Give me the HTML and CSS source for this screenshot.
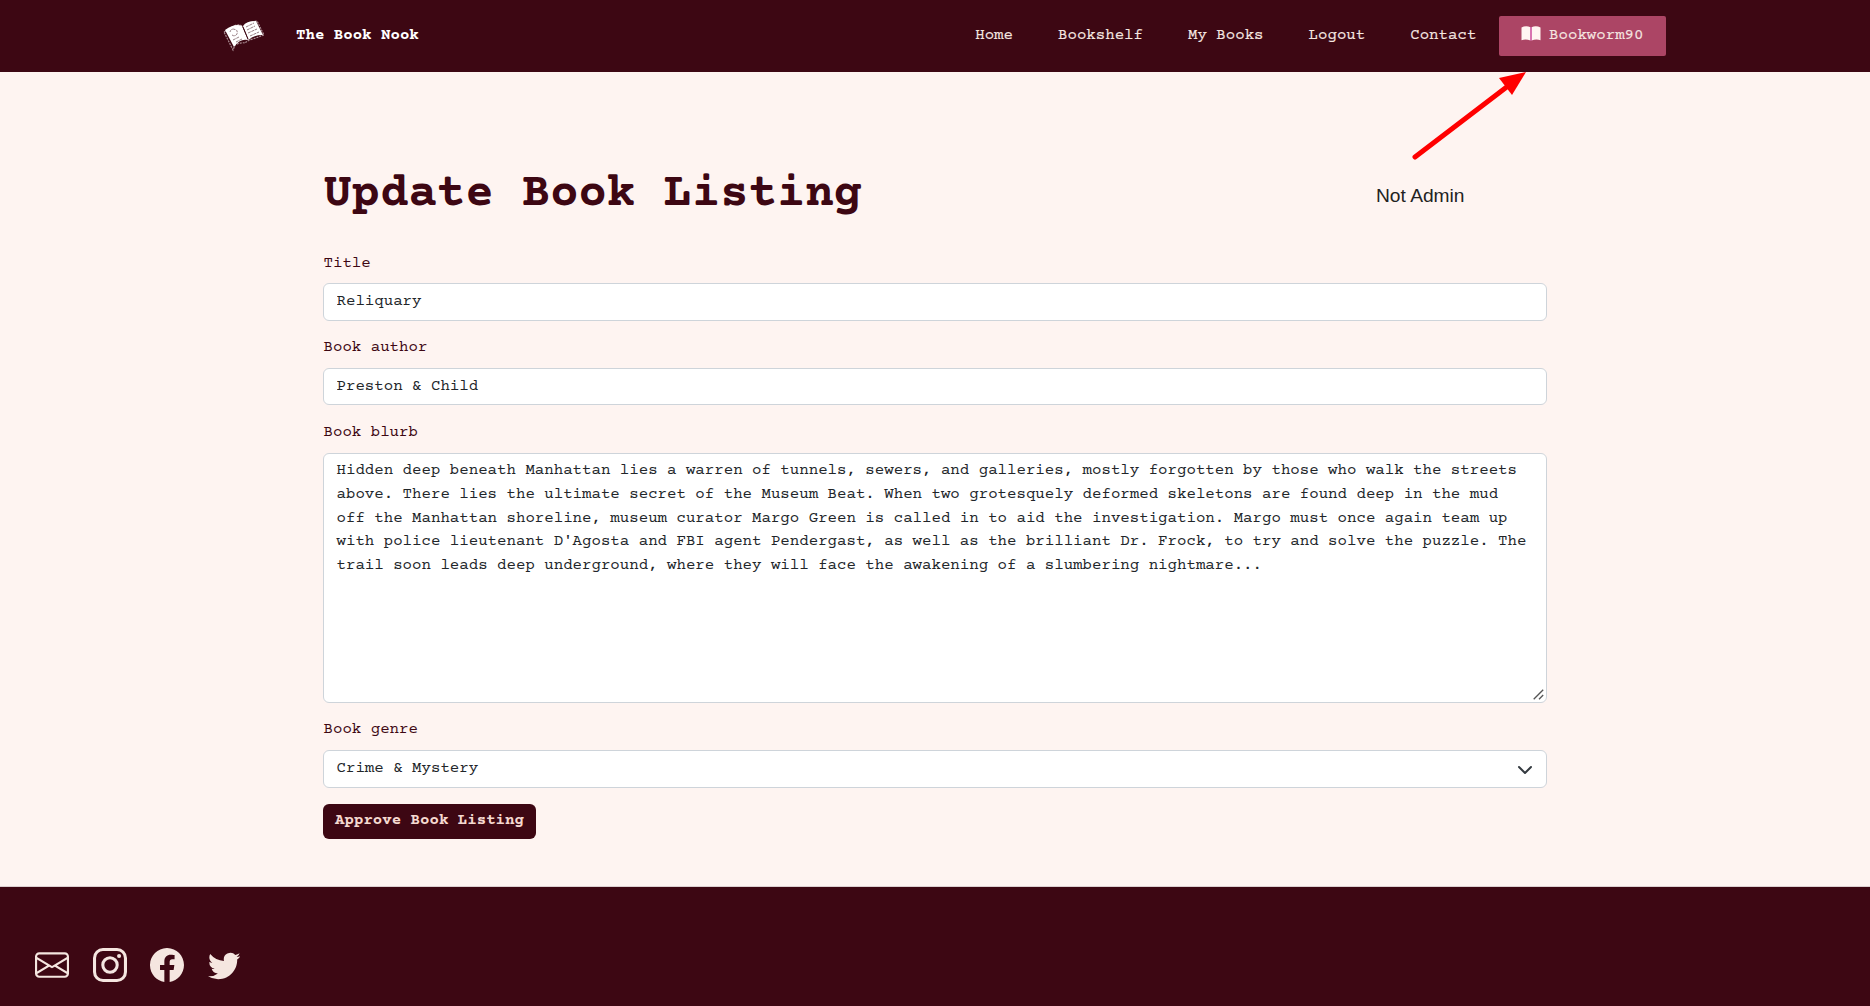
FILE: index.html
```html
<!DOCTYPE html>
<html lang="en">
<head>
<meta charset="utf-8">
<title>The Book Nook</title>
<link rel="stylesheet" href="styles.css">
</head>
<body>
<header class="navbar">
  <a class="brand">
    <svg class="logo" viewBox="0 0 42 32">
      <path d="M1 12L11 6Q17 3 21 8Q23 3 28 2L34 1L41 15L30 19Q25 20 22 23Q18 22 12 25L10 30Z" fill="none" stroke="#a98c92" stroke-width="1.200" stroke-dasharray="2 1"/>
      <path d="M2 10Q12 3 19 6L25 20Q17 18 11 27Z" fill="#fff"/>
      <path d="M20 6Q23 1 33 1L40 15Q30 15 25.500 20Z" fill="#fff"/>
      <path d="M7 12Q8 8 12 9.500Q15 10 14 14Q12 17 9 15M10 20l6-3M13 22l6-3M23 7l8-4M24 10l8-4M25 13l9-4M27 16l9-4" fill="none" stroke="#8b7177" stroke-width=".9" stroke-dasharray="3 .7"/>
      <path d="M20 7L25 19" stroke="#3d0713" stroke-width="1"/>
    </svg>
    <span>The Book Nook</span>
  </a>
  <nav class="links">
    <a>Home</a>
    <a>Bookshelf</a>
    <a>My Books</a>
    <a>Logout</a>
    <a>Contact</a>
    <a class="user"><svg class="book" viewBox="0 0 20 15"><path d="M.5 1.500Q5-.7 9.500 1.300V14.600Q5 12.700 .5 14.200ZM10.500 1.300Q15-.7 19.500 1.500V14.200Q15 12.700 10.500 14.600Z" fill="#fff5f2"/><path d="M10 1V14.500" stroke="#d94bb5" stroke-width="1"/></svg>Bookworm90</a>
  </nav>
</header>
<svg class="arrow" viewBox="0 0 120 92"><path d="M5 87L98 16" stroke="#f00" stroke-width="5" stroke-linecap="round"/><path d="M89 8L116 2L102 25Z" fill="#f00"/></svg>
<span class="note">Not Admin</span>
<main class="content">
  <h1>Update Book Listing</h1>
  <form>
    <label for="title">Title</label>
    <input id="title" class="field" type="text" value="Reliquary">
    <label for="author">Book author</label>
    <input id="author" class="field" type="text" value="Preston &amp; Child">
    <label for="blurb">Book blurb</label>
    <div class="blurb-wrap">
      <textarea id="blurb" class="field blurb" spellcheck="false">Hidden deep beneath Manhattan lies a warren of tunnels, sewers, and galleries, mostly forgotten by those who walk the streets above. There lies the ultimate secret of the Museum Beat. When two grotesquely deformed skeletons are found deep in the mud off the Manhattan shoreline, museum curator Margo Green is called in to aid the investigation. Margo must once again team up with police lieutenant D'Agosta and FBI agent Pendergast, as well as the brilliant Dr. Frock, to try and solve the puzzle. The trail soon leads deep underground, where they will face the awakening of a slumbering nightmare...</textarea>
      <svg class="grip" viewBox="0 0 11 11"><path d="M.7 10.200L10.200.7M6 10.200L10.200 6" stroke="#555" stroke-width="1.300" fill="none"/></svg>
    </div>
    <label for="genre">Book genre</label>
    <div class="field select" id="genre"><span>Crime &amp; Mystery</span><svg viewBox="0 0 16 16"><path d="m2 5 6 6 6-6" fill="none" stroke="#343a40" stroke-width="2" stroke-linecap="round" stroke-linejoin="round"/></svg></div>
    <button type="button">Approve Book Listing</button>
  </form>
</main>
<footer>
  <svg viewBox="0 0 16 16"><path d="M0 4a2 2 0 0 1 2-2h12a2 2 0 0 1 2 2v8a2 2 0 0 1-2 2H2a2 2 0 0 1-2-2V4Zm2-1a1 1 0 0 0-1 1v.217l7 4.200 7-4.200V4a1 1 0 0 0-1-1H2Zm13 2.383-4.708 2.825L15 11.105V5.383Zm-.034 6.876-5.640-3.471L8 9.583l-1.326-.795-5.640 3.470A1 1 0 0 0 2 13h12a1 1 0 0 0 .966-.741ZM1 11.105l4.708-2.897L1 5.383v5.722Z"/></svg>
  <svg viewBox="0 0 16 16"><path fill-rule="evenodd" d="M4.700 0h6.600A4.700 4.700 0 0 1 16 4.700v6.600a4.700 4.700 0 0 1-4.700 4.700H4.700A4.700 4.700 0 0 1 0 11.300V4.700A4.700 4.700 0 0 1 4.700 0Zm0 1.440A3.260 3.260 0 0 0 1.440 4.700v6.600a3.260 3.260 0 0 0 3.260 3.260h6.600a3.260 3.260 0 0 0 3.260-3.260V4.700a3.260 3.260 0 0 0-3.260-3.260ZM8 3.890a4.110 4.110 0 1 1 0 8.220 4.110 4.110 0 0 1 0-8.220Zm0 1.440a2.670 2.670 0 1 0 0 5.340 2.670 2.670 0 0 0 0-5.340Z"/><circle cx="12.270" cy="3.730" r=".96"/></svg>
  <svg viewBox="0 0 16 16"><path d="M16 8.049c0-4.446-3.582-8.050-8-8.050C3.580 0-.002 3.603-.002 8.050c0 4.017 2.926 7.347 6.750 7.951v-5.625h-2.030V8.050H6.750V6.275c0-2.017 1.195-3.131 3.022-3.131.876 0 1.791.157 1.791.157v1.980h-1.009c-.993 0-1.303.621-1.303 1.258v1.510h2.218l-.354 2.326H9.250V16c3.824-.604 6.750-3.934 6.750-7.951z"/></svg>
  <svg class="twitter" viewBox="0 0 16 16"><path d="M5.026 15c6.038 0 9.341-5.003 9.341-9.334 0-.14 0-.282-.006-.422A6.685 6.685 0 0 0 16 3.542a6.658 6.658 0 0 1-1.889.518 3.301 3.301 0 0 0 1.447-1.817 6.533 6.533 0 0 1-2.087.793A3.286 3.286 0 0 0 7.875 6.030a9.325 9.325 0 0 1-6.767-3.429 3.289 3.289 0 0 0 1.018 4.382A3.323 3.323 0 0 1 .64 6.575v.045a3.288 3.288 0 0 0 2.632 3.218 3.203 3.203 0 0 1-.865.115 3.230 3.230 0 0 1-.614-.057 3.283 3.283 0 0 0 3.067 2.277A6.588 6.588 0 0 1 .78 13.580a6.320 6.320 0 0 1-.780-.045A9.344 9.344 0 0 0 5.026 15z"/></svg>
</footer>
</body>
</html>
```
FILE: styles.css
```css
* { box-sizing: border-box; }
html { font-size: 15.75px; }
body {
  margin: 0;
  height: 1006px;
  display: flex;
  flex-direction: column;
  overflow: hidden;
  position: relative;
  background: #fef4f1;
  color: #3d0713;
  font: 1rem/1.5 "Courier Prime", "Liberation Mono", "Courier New", monospace;
}
.navbar {
  height: 72px;
  flex: none;
  padding: 0 204px 0 223px;
  display: flex;
  align-items: center;
  justify-content: space-between;
  background: #3d0713;
}
.brand { display: flex; align-items: center; color: #fff; font-weight: 700; }
.brand span { padding-bottom: 1px; }
.logo { width: 42px; height: 32px; margin-right: 31px; }
.links { display: flex; color: #f5e6e0; -webkit-text-stroke: .12px #f5e6e0; }
.links a { height: 40px; padding: 0 22.500px 1px; display: flex; align-items: center; }
.links .user { background: #ac4565; border-radius: 2px; }
.book { width: 20px; height: 15px; margin: -4px 8.400px 0 -.7px; }
.arrow { position: absolute; left: 1410px; top: 70px; width: 120px; height: 92px; }
.note { position: absolute; left: 1376px; top: 182px; font: 19.200px/28px "Liberation Sans", Arial, sans-serif; color: #222; }
.content { width: 1224px; margin: 0 auto; padding-top: 95px; height: 814px; flex: none; }
h1 { margin: 0 0 28.500px; height: 56px; font-size: 3rem; line-height: 56px; padding-left: .5px; }
form { display: flex; flex-direction: column; }
label { margin-bottom: .5rem; height: 1.500rem; line-height: 1.500; padding-left: .5px; }
.field {
  width: 100%;
  height: 37.600px;
  margin: 0 0 1rem;
  padding: 5.800px 12.500px 5.800px;
  border: 1px solid #ced4da;
  border-radius: 6px;
  background: #fff;
  color: #212529;
  font: inherit;
  outline: none;
}
.blurb-wrap { position: relative; height: 250px; margin-bottom: 1rem; }
.blurb { height: 250px; margin: 0; resize: none; display: block; }
.grip { position: absolute; right: 3px; bottom: 3px; width: 11px; height: 11px; }
.select { display: flex; align-items: center; justify-content: space-between; }
.select svg { width: 16px; height: 16px; margin: 2px .5px 0 0; }
button {
  align-self: flex-start;
  width: 213px;
  height: 35px;
  margin-top: .7px;
  padding: 0 0 1.500px;
  border: 0;
  border-radius: 6px;
  background: #3d0713;
  color: #f5d9d0;
  font: inherit;
  font-weight: 700;
}
footer {
  flex: 1;
  border-top: 1px solid #dccfd0;
  background: #3d0713;
  padding: 61px 35px 0;
  display: flex;
  gap: 23.500px;
}
footer svg { width: 34px; height: 34px; fill: #f5e6e0; }
footer .twitter { width: 32.500px; }
```
